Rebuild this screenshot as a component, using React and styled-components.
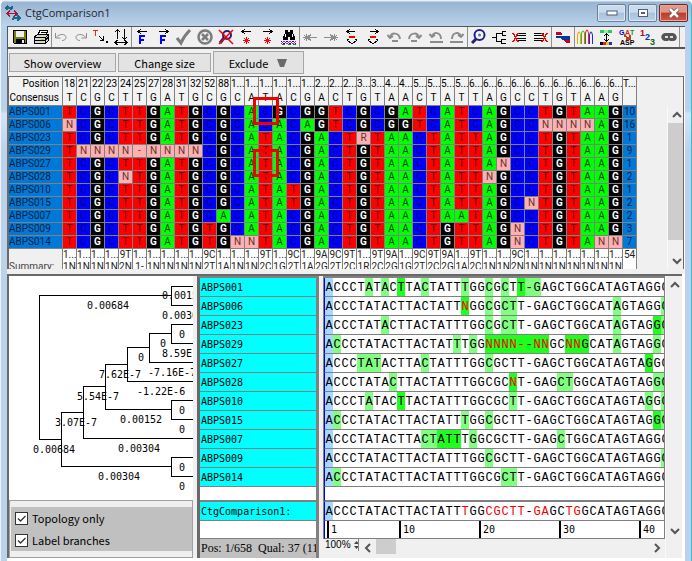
import React from 'react';
import styled, { createGlobalStyle } from 'styled-components';

const ui = '"Noto Sans CJK JP", "Open Sans", sans-serif';
const grid = 'Roboto, "Open Sans", sans-serif';
const mono = '"DejaVu Sans Mono", "Liberation Mono", monospace';

const GlobalStyle = createGlobalStyle`
  * { box-sizing: border-box; }
  body { margin: 0; background: #ffffff; font-family: ${ui}; font-size: 12px; color: #000; }
  button { font: inherit; color: inherit; margin: 0; padding: 0; }
  svg { display: block; }
`;

const Window = styled.div`
  display: flex;
  flex-direction: column;
  min-height: 100vh;
  overflow: hidden;
  background: linear-gradient(#b9d1ea 0 110px, #d4e4f4 114px, #bcd2ea 150px);
  border-right: 1px solid #22c4e0;
  border-bottom: 1px solid #22c4e0;
  border-left: 1px solid #eef4fa;
  border-radius: 6px 6px 0 0;
`;

const TitleBar = styled.header`
  display: flex;
  align-items: center;
  gap: 4px;
  height: 26px;
  padding: 0 3px 0 4px;
  background: linear-gradient(#e6eef7 0 1px, #98b4d2 2px, #b9d1ea 25px);
`;

const Title = styled.h1`
  flex: 1;
  margin: 0;
  font: 11px/18px "Open Sans", "Noto Sans", sans-serif;
  color: #1c2733;
`;

const Caption = styled.button`
  display: flex;
  align-items: center;
  justify-content: center;
  width: 29px;
  height: 18px;
  margin-left: -2px;
  border: 1px solid ${(p) => (p.$close ? '#6b2a26' : '#6d7f95')};
  border-radius: 2px;
  box-shadow: inset 0 0 0 1px ${(p) => (p.$close ? '#e6a89d' : '#dbe7f4')};
  background: ${(p) =>
    p.$close
      ? 'linear-gradient(#e0978a 0 45%, #c0392b 50%, #cc5a48)'
      : 'linear-gradient(#c9dbee 0 45%, #a9c1db 50%, #b8d0e8)'};
`;

const Client = styled.main`
  flex: 1;
  display: flex;
  flex-direction: column;
  margin: 0 6px;
  padding-bottom: 3px;
  background: #ffffff;
`;

const Toolbar = styled.div`
  display: flex;
  height: 23px;
  padding-left: 1px;
  overflow: hidden;
  background: #f0f0f0;
  border: 1px solid #555;
  border-right: 0;
  border-bottom-width: 2px;
`;

const ToolGroup = styled.div`
  display: flex;
  flex: none;
  padding: 0 ${(p) => (p.$wide ? 1 : 0)}px;
  box-shadow: ${(p) => (p.$first ? 'none' : 'inset 1px 0 #909090')};
`;

const Tool = styled.button`
  display: flex;
  align-items: center;
  justify-content: center;
  width: ${(p) => (p.$narrow ? 20 : 21)}px;
  border: 0;
  background: none;
`;

const ActionBar = styled.div`
  display: flex;
  align-items: center;
  gap: 2px;
  height: 27px;
  padding-left: 1px;
  background: #f0f0f0;
  border-left: 1px solid #696969;
`;

const Action = styled.button`
  display: flex;
  align-items: center;
  justify-content: center;
  gap: 8px;
  width: ${(p) => p.$width}px;
  height: ${(p) => (p.$menu ? 23 : 19)}px;
  border: 1px solid #a6a6a6;
  background: #e3e3e3;
  font: 11px/14px ${ui};
`;

const ComparisonPane = styled.section`
  position: relative;
  display: flex;
  height: 193px;
  margin-right: 1px;
  overflow: hidden;
  background: #f0f0f0;
  border: solid #696969;
  border-width: 1px 1px 0 2px;
`;

const Table = styled.table`
  flex: none;
  align-self: flex-start;
  border-spacing: 0;
  table-layout: fixed;
  width: 628px;
  font: 10px/12px ${grid};
`;

const NameCol = styled.col`
  width: 54px;
`;

const SiteCol = styled.col`
  width: 14px;
`;

const line = '1px solid #808080';

const HeadCell = styled.th`
  height: 29px;
  padding: 0;
  padding-right: ${(p) => (p.$name ? 3 : 0)}px;
  border-right: ${line};
  border-bottom: ${line};
  background: #f3f3f3;
  font-weight: 400;
  line-height: 14px;
  text-align: ${(p) => (p.$name ? 'right' : 'center')};
  vertical-align: top;
  overflow: hidden;
  white-space: nowrap;
`;

const NameCell = styled.th`
  height: 13px;
  padding: 0;
  border-right: ${line};
  border-bottom: ${line};
  background: #0078d7;
  color: #06223c;
  font-weight: 400;
  text-align: ${(p) => (p.$total ? 'center' : 'left')};
`;

const baseColors = {
  A: ['#00ff00', '#003c00'],
  C: ['#0000ff', '#000070'],
  G: ['#000000', '#ffffff'],
  T: ['#ff0000', '#500000'],
  N: ['#ffafaf', '#5a3434'],
};

const BaseCell = styled.td`
  height: 13px;
  padding: 0;
  border-right: ${line};
  border-bottom: ${line};
  background: ${(p) => (baseColors[p.$base] || baseColors.N)[0]};
  color: ${(p) => (baseColors[p.$base] || baseColors.N)[1]};
  font-weight: ${(p) => (p.$base === 'G' ? 700 : 400)};
  text-align: center;
`;

const SummaryCell = styled.td`
  height: 26px;
  padding: ${(p) => (p.$name ? '12px 0 0' : 0)};
  border-right: ${line};
  background: ${(p) => (p.$name ? '#f0f0f0' : '#ffffff')};
  color: ${(p) => (p.$name ? '#444' : '#222')};
  text-align: ${(p) => (p.$name ? 'left' : 'center')};
  vertical-align: top;
  overflow: hidden;
  white-space: nowrap;
`;

const Marker = styled.div`
  position: absolute;
  left: 244px;
  top: ${(p) => p.$top}px;
  width: 26px;
  height: 28px;
  border: 3px solid #f00000;
`;

const VScroll = styled.div`
  display: flex;
  flex-direction: column;
  width: ${(p) => p.$width}px;
  margin-left: ${(p) => (p.$far ? 'auto' : 0)};
  margin-top: ${(p) => p.$top || 0}px;
  padding-bottom: ${(p) => p.$bottom || 0}px;
  border-left: 1px solid #fafafa;
  background: #f0f0f0;
`;

const ScrollArrow = styled.button`
  display: flex;
  align-items: center;
  justify-content: center;
  flex: none;
  width: 17px;
  height: 17px;
  border: 0;
  background: none;
`;

const Track = styled.div`
  flex: 1;
  display: flex;
`;

const Thumb = styled.div`
  width: ${(p) => p.$w};
  height: ${(p) => p.$h};
  background: #cdcdcd;
`;

const Splitter = styled.div`
  height: 5px;
  background: #f0f0f0;
`;

const AlignPane = styled.section`
  flex: 1;
  display: flex;
  margin-right: 3px;
  background: #f0f0f0;
  border: solid #696969;
  border-width: 2px 0 0 2px;
`;

const TreeColumn = styled.div`
  display: flex;
  flex-direction: column;
  width: 184px;
  margin-right: 4px;
  background: #ffffff;
`;

const TreeSvg = styled.svg`
  flex: none;
  shape-rendering: crispEdges;
  font: 10px ${mono};
`;

const OptionsFrame = styled.div`
  flex: 1;
  padding: 6px 0 6px 1px;
  background: #efefef;
  border: 1px solid #a0a0a0;
`;

const Options = styled.div`
  display: flex;
  flex-direction: column;
  justify-content: space-around;
  height: 100%;
  background: #c0c0c0;
`;

const Option = styled.label`
  display: flex;
  align-items: center;
  gap: 4px;
  padding-left: 4px;
  font: 11px/16px ${ui};
`;

const Check = styled.input`
  appearance: none;
  width: 13px;
  height: 13px;
  margin: 0;
  border: 1px solid #333;
  background: #fff
    url("data:image/svg+xml,%3Csvg xmlns='http://www.w3.org/2000/svg' viewBox='0 0 11 11'%3E%3Cpath d='M2 5.5l2.5 2.5L9.5 3' fill='none' stroke='%23333' stroke-width='1.3'/%3E%3C/svg%3E");
`;

const NameList = styled.div`
  display: flex;
  flex-direction: column;
  width: 122px;
  border: solid #808080;
  border-width: 2px 3px 0 3px;
  border-left-color: #696969;
  font: 10px/18px ${mono};
`;

const NameRow = styled.div`
  height: ${(p) => p.$h || 19}px;
  padding: 1px 0 0 1px;
  border-bottom: ${(p) => p.$rule || 1}px solid #808080;
  background: ${(p) => (p.$blank ? '#ffffff' : '#00ffff')};
  white-space: nowrap;
`;

const Status = styled.div`
  flex: 1;
  overflow: hidden;
  padding-left: 1px;
  background: #c0c0c0;
  font: 12px/19px "Liberation Serif", serif;
  white-space: pre;
`;

const SequenceColumn = styled.div`
  flex: 1;
  min-width: 0;
  display: flex;
  flex-direction: column;
  margin-left: 4px;
`;

const SequenceArea = styled.div`
  border: solid #808080;
  border-width: 2px 1px 0 1px;
  background: #ffffff;
`;

const SeqRow = styled.div`
  display: flex;
  height: ${(p) => p.$h || 19}px;
  overflow: hidden;
  border-left: 1px solid #0000f0;
  border-bottom: ${(p) => p.$rule || 1}px solid #808080;
`;

const shades = { light: '#80ff80', dark: '#1eff1e', cursor: '#a6d8ff', none: 'transparent' };

const Letter = styled.span`
  flex: none;
  width: 8px;
  padding-top: 1px;
  background: ${(p) => shades[p.$shade]};
  color: ${(p) => (p.$red ? '#f00000' : '#000000')};
  font: 12px/18px "Liberation Mono", monospace;
  text-align: center;
`;

const Tick = styled.span`
  flex: none;
  width: ${(p) => p.$span * 8}px;
  border-left: 2px solid #000;
  padding-left: 2px;
  font: 10px/18px ${mono};
`;

const Ruler = styled(SeqRow)`
  padding-left: 2px;
`;

const BottomBar = styled.div`
  flex: 1;
  display: flex;
  align-items: flex-start;
`;

const ZoomButton = styled.button`
  display: flex;
  align-items: center;
  gap: 3px;
  width: 36px;
  height: 12px;
  padding-left: 2px;
  border: 0;
  border-right: 1px solid #808080;
  background: none;
  font: 10px/12px "Liberation Sans", sans-serif;
`;

const Arrow = ({ d }) => (
  <svg width="10" height="10" viewBox="0 0 10 10" fill="none" stroke="#555" strokeWidth="2">
    <path d={d} />
  </svg>
);
const UP = 'M1 7l4-4 4 4';
const DOWN = 'M1 3l4 4 4-4';
const LEFT = 'M7 1l-4 4 4 4';
const RIGHT = 'M3 1l4 4-4 4';

const Svg = ({ children, crisp = true }) => (
  <svg width="16" height="18" viewBox="0 0 16 18" fill="none" stroke="#000" shapeRendering={crisp ? 'crispEdges' : 'auto'}>
    {children}
  </svg>
);

const Star = ({ x, y, c = 'red' }) => (
  <path stroke={c} strokeWidth="1" d={`M${x - 3} ${y + 0.5}h7M${x + 0.5} ${y - 3}v7M${x - 2} ${y - 2}l5 5M${x + 3} ${y - 2}l-5 5`} />
);

const SmallArrow = ({ right, x = 3, y = 3.5, len = 9 }) =>
  right ? (
    <path d={`M${x} ${y}h${len}M${x + len - 3} ${y - 2.5}l3 2.5l-3 2.5`} />
  ) : (
    <path d={`M${x} ${y}h${len}M${x + 3} ${y - 2.5}l-3 2.5l3 2.5`} />
  );

const icons = {
  Save: (
    <Svg>
      <path d="M1.5 2.5h13v13h-12l-1-1z" fill="#7c7c10" />
      <path d="M4 3h8v6H4z" fill="#eee" stroke="none" />
      <path d="M4 11h9v4H4z" fill="#000" stroke="none" />
      <path d="M10 12h2v3h-2z" fill="#eee" stroke="none" />
    </Svg>
  ),
  Print: (
    <Svg>
      <path d="M5 7l2-5h8l-2 5" fill="#fff" />
      <path d="M7.5 4.5h5M6.5 6.5h5" />
      <path d="M1.5 9l3-2.5h11v6l-3 3h-11z" fill="#d8d8d0" />
      <path d="M1.5 9.5h11v6M1.5 12.5h11M12.5 9.5l3-3M12.5 12l3-3" />
      <path d="M8 11h3" stroke="#c8c800" />
    </Svg>
  ),
  Undo: (
    <Svg crisp={false}>
      <path stroke="#8c8c8c" d="M2.5 5v5h5M3 9.500c3-4 10-4 10 0 0 2-2 3-4 3" />
    </Svg>
  ),
  Redo: (
    <Svg crisp={false}>
      <path stroke="#8c8c8c" d="M13.5 5v5h-5M13 9.500c-3-4-10-4-10 0 0 2 2 3 4 3" />
    </Svg>
  ),
  'Move text': (
    <Svg>
      <path stroke="#f02020" d="M0 2.5h5M2.5 2v6" />
      <path d="M6 8l4 4M10.5 8v4.500h-4" />
      <path d="M13 13h2v2h-2z" fill="#000" stroke="none" />
    </Svg>
  ),
  Resize: (
    <Svg>
      <path d="M4.5 1v10M2 4l2.500-2.500L7 4M11.500 1v10M9 9l2.500 2.500L14 9M2 14.500h12M4.500 12L2 14.500 4.500 17M11.500 12l2.500 2.500-2.500 2.500" />
    </Svg>
  ),
  'Previous feature': (
    <Svg>
      <SmallArrow x={4} />
      <path stroke="#0000ff" strokeWidth="2" d="M6 16V8h5M5 12h5" />
    </Svg>
  ),
  'Next feature': (
    <Svg>
      <SmallArrow right x={4} />
      <path stroke="#0000ff" strokeWidth="2" d="M6 16V8h5M5 12h5" />
    </Svg>
  ),
  Accept: (
    <Svg crisp={false}>
      <path stroke="#7c7c7c" strokeWidth="3" d="M1 10l4 5c2-5 5-9 9-13" />
    </Svg>
  ),
  Reject: (
    <Svg crisp={false}>
      <circle cx="8" cy="9" r="6.5" stroke="#7c7c7c" strokeWidth="2.5" />
      <path stroke="#7c7c7c" strokeWidth="2.5" d="M5 6l6 6M11 6l-6 6" />
    </Svg>
  ),
  'Clear search': (
    <Svg crisp={false}>
      <circle cx="9" cy="7" r="4" stroke="#202080" strokeWidth="2" />
      <path stroke="#202080" strokeWidth="3" d="M6 10l-4 5" />
      <path stroke="red" strokeWidth="1.5" d="M1 2l14 14M15 2L1 16" />
    </Svg>
  ),
  'Previous mark': (<Svg><SmallArrow x={3} /><Star x={7} y={12} /></Svg>),
  'Next mark': (<Svg><SmallArrow right x={3} /><Star x={7} y={12} /></Svg>),
  Find: (
    <Svg>
      <path fill="#000" stroke="none" d="M4 2h3v2h2V2h3v3l2 4v3H9V9H7v3H2V9l2-4z" />
      <path stroke="#fff" d="M4.5 6v3M11.5 6v3" />
      <path stroke="#0000ff" d="M0 13.5l3 2 3-2 3 2 3-2 3 2" />
      <path stroke="#c020a0" d="M0 15.5l3-2 3 2 3-2 3 2 3-2" />
      <path stroke="#109010" d="M1 16.5h3M7 16.5h3M12 16.5h3" />
    </Svg>
  ),
  'Previous difference': (<Svg><Star x={4} y={9} c="#8c8c8c" /><path stroke="#8c8c8c" d="M6 9.5h9M9 6.5l-3 3 3 3" /></Svg>),
  'Next difference': (<Svg><Star x={11} y={9} c="#8c8c8c" /><path stroke="#8c8c8c" d="M1 9.5h9M7 6.5l3 3-3 3" /></Svg>),
  'Previous gap': (<Svg><SmallArrow x={3} len={8} /><path stroke="red" strokeWidth="2" d="M5 9h6" /><path d="M3 11.5h2M11 11.5h2M3 12l5 4 5-4" /></Svg>),
  'Next gap': (<Svg><SmallArrow right x={5} len={8} /><path stroke="red" strokeWidth="2" d="M5 9h6" /><path d="M3 11.5h2M11 11.5h2M3 12l5 4 5-4" /></Svg>),
  'Rotate back': (<Svg crisp={false}><path stroke="#8c8c8c" strokeWidth="2" d="M4 10c1-6 9-6 10 1M1.5 7l2.5 3 3-2M6 13h6" /></Svg>),
  'Rotate forward': (<Svg crisp={false}><path stroke="#8c8c8c" strokeWidth="2" d="M12 10c-1-6-9-6-10 1M14.5 7L12 10 9 8M4 13h6" /></Svg>),
  'Undo all': (<Svg crisp={false}><path stroke="#8c8c8c" strokeWidth="2" d="M4 9c1-6 9-5 9 2M1.5 6L4 9l3-2M2 14h13" /></Svg>),
  'Redo all': (<Svg crisp={false}><path stroke="#8c8c8c" strokeWidth="2" d="M12 9c-1-6-9-5-9 2M14.5 6L12 9 9 7M1 14h13" /></Svg>),
  Zoom: (
    <Svg crisp={false}>
      <circle cx="9.5" cy="7" r="5" stroke="#202080" strokeWidth="2" fill="#f4f6fc" />
      <circle cx="9.5" cy="7" r="1.5" fill="#5878b0" stroke="none" />
      <path stroke="#202080" strokeWidth="3" d="M6 11l-4 4" />
    </Svg>
  ),
  Tree: (<Svg><path d="M15 3.5h-4v4h4M11 5.5H5.5v8H10M1 9.5h4M15 11.5h-5v4h5" /></Svg>),
  'Remove left': (<Svg><path d="M5 5.5h9M5 7.5h9M5 10.5h9M5 12.5h9" /><path stroke="red" strokeWidth="1.5" d="M1 5l5 9M6 5l-5 9" /></Svg>),
  'Remove right': (<Svg><path d="M1 5.5h10M1 7.5h10M1 10.5h10M1 12.5h10" /><path stroke="red" strokeWidth="1.5" d="M9 5l5 9M14 5l-5 9" /></Svg>),
  Strands: (
    <Svg>
      <path fill="#c80028" stroke="none" d="M1 4h4l2 2v1H1zM8 12h7v3h-4z" />
      <path fill="#003c96" stroke="none" d="M1 8h14v4H7L5 10H1z" />
    </Svg>
  ),
  Traces: (
    <Svg crisp={false}>
      <path stroke="#ff9c00" d="M.5 16V7l1-3h1l1 3v9" />
      <path stroke="#22c822" d="M4.500 16V5l1-2h1l1 2v11" />
      <path stroke="#f02020" d="M8.5 16V5l1-3h1l1 3v11" />
      <path stroke="#1830e0" d="M12.500 16V7l1-3h1l1 3v9" />
    </Svg>
  ),
  'Fit height': (
    <Svg>
      <path stroke="#30c860" strokeWidth="3" d="M2 3.5h4M10 3.5h4" />
      <path stroke="#a0e8a0" strokeWidth="3" d="M6 3.5h4" />
      <path d="M8.5 5.5v8M6 8l2.500-2.500L11 8M6 11l2.500 2.500L11 11" />
      <path strokeWidth="3" d="M2 15.5h3" />
      <path stroke="#e02020" strokeWidth="3" d="M5 15.5h3" />
      <path stroke="#f0c000" strokeWidth="3" d="M8 15.5h3" />
      <path stroke="#2030c0" strokeWidth="3" d="M11 15.5h3" />
    </Svg>
  ),
  Translate: (
    <Svg>
      <g fontFamily="Liberation Sans" fontSize="7" fontWeight="700" stroke="none">
        <text x="0" y="7" fill="#0000e0">G</text>
        <text x="6" y="7" fill="#d02020">A</text>
        <text x="11" y="7" fill="#109010">T</text>
        <text x="1" y="17" fill="#000">ASP</text>
      </g>
      <path stroke="#c04010" strokeWidth="2" d="M5 7l5 4M11 7v4H7" />
    </Svg>
  ),
  Numbering: (
    <Svg>
      <g fontFamily="Liberation Sans" fontSize="9" fontWeight="700" stroke="none">
        <text x="0" y="8" fill="#c00020">1</text>
        <text x="5" y="12" fill="#0030c0">2</text>
        <text x="10" y="17" fill="#106010">3</text>
      </g>
    </Svg>
  ),
  Mask: (
    <Svg crisp={false}>
      <path fill="#555" stroke="none" d="M4 5h8c5 1 5 8 0 8H9L8 12 7 13H4C-1 12-1 6 4 5z" />
      <path fill="#ddd" stroke="none" d="M4 8h3v2H4zM9 8h3v2H9z" />
    </Svg>
  ),
  Panels: (<Svg><path stroke="#666" d="M2.5 2.5h10v5h-10zM2.5 10.5h10v5h-10zM5 5.5h5" /></Svg>),
};

const toolGroups = [
  ['Save', 'Print'],
  ['Undo', 'Redo', 'Move text', 'Resize'],
  ['Previous feature', 'Next feature', 'Accept', 'Reject', 'Clear search', 'Previous mark', 'Next mark', 'Find'],
  ['Previous difference', 'Next difference', 'Previous gap', 'Next gap', 'Rotate back', 'Rotate forward', 'Undo all', 'Redo all'],
  ['Zoom', 'Tree', 'Remove left', 'Remove right'],
  ['Strands'],
  ['Traces', 'Fit height', 'Translate', 'Numbering', 'Mask'],
  ['Panels'],
];

const positions = '18 21 22 23 24 25 27 28 31 32 52 88 1 1 1 1 1 1 2 2 2 3 3 4 4 5 5 5 5 6 6 6 6 6 6 6 6 6 6 6'
  .split(' ')
  .map((p) => (p.length === 1 ? `${p}...` : p));
const consensus = 'TCGCTTGATGCGCATACGACTGTAACTATTAGCCTGTAAG';

const samples = [
  ['ABPS001', 'TCGCTTGATGCGCACGCGGTCGCGATCATCAGCCTGTAAG', 10],
  ['ABPS006', 'NCGCTTGATGCGCACACAGTCGCGGTCATCAGCCNNNNAG', 16],
  ['ABPS023', 'TCGCTTGATGCGCATACGACTRTAACTATTAGCCTGTAAG', 1],
  ['ABPS029', 'TNNNN-NNNNCGCATACGACTGTAACTATTAGCCTGTAAG', 9],
  ['ABPS027', 'TCGCTTGATGCGCATACGACTGTAACTATTANCCTGTAAG', 1],
  ['ABPS028', 'TCGCNTGATGCGCATACGACTGTAACTATTNGCCTGTAAG', 2],
  ['ABPS010', 'TCGCTTGATGCGCATATGACTGTAACTATTAGCCTGTAAG', 1],
  ['ABPS015', 'TCGCTTGATGCGCATATGACTGTAACTATTAGCNTGTAAG', 2],
  ['ABPS007', 'TCGCTTGATGCACATACGACTGTAACTAATAGCCTGTAAG', 2],
  ['ABPS009', 'TCGCTTGATGTGCATACGACTGTAACTGTTAGNCTGTAAG', 3],
  ['ABPS014', 'TCGCTTGATGTGNNTACGACTGTAACTGTTAGNCTGTANN', 7],
];

const summary = (
  '1N 1N 1N 1N 9T2N 1- 1N 1N 1N 1N 9C2T 1A 1N 1N 9T2C 1G 9C2T 1A 9A2G 9C2T 9T2C 1R 9T2C 9A2G 1G ' +
  '9C2T 9T2C 9A2G 1A 9T2C 1N 1N 9C2N 1N 1N 1N 1N 1N 1N 1N'
)
  .split(' ')
  .map((s) => (s.length === 4 ? [s.slice(0, 2), s.slice(2)] : ['1...', s]));

const reference = 'ACCCTATACTTACTATTTGGCGCTT-GAGCTGGCATAGTAGGC';

const alignment = [
  { light: [5, 7, 12, 17, 20, 22, 25, 26], dark: [9, 24] },
  { light: [20, 22, 23, 36, 42], dark: [17], edits: { 17: 'N' } },
  { light: [7, 20, 22, 23, 36, 42], dark: [41] },
  {
    light: [1, 16, 18, 36, 41],
    dark: [20, 21, 22, 23, 24, 25, 26, 27, 30, 31, 32],
    edits: { 20: 'N', 21: 'N', 22: 'N', 23: 'N', 24: '-', 26: 'N', 27: 'N', 30: 'N', 31: 'N' },
  },
  { light: [4, 5, 6, 12, 20], dark: [40] },
  { light: [8, 29, 30, 41, 42], dark: [23], edits: { 23: 'N' } },
  { light: [5, 23, 40, 42], dark: [9] },
  { light: [1, 17, 20, 42], dark: [41] },
  { light: [12, 13, 18, 29], dark: [14, 15, 16] },
  { light: [20, 42] },
  { light: [1, 22, 23] },
];

const variable = [17, 20, 21, 22, 23, 24, 26, 27, 30, 31];

const branches =
  'M39.5 295V439.5M39 295.5H171M171.5 286V305M171 286.5H193M171 305.5H193' +
  'M171.5 324V343M171 324.5H193M171 343.5H193M149.5 333V362M149 333.5H171M149 362.5H193' +
  'M127.5 347V381M127 347.5H149M127 381.5H193M105.5 364V409M105 364.5H127M105 409.5H171' +
  'M171.5 400V419M171 400.5H193M171 419.5H193M83.5 386V438M83 386.5H105M83 438.5H193' +
  'M61.5 412V466M61 412.5H83M61 466.5H171M171.5 457V476M171 457.5H193M171 476.5H193M39 439.5H61';

const branchLabels = [
  [162, 295, '0.00152'], [87, 305, '0.00684'], [162, 315, '0.00304'], [179, 334, '0'], [160, 343, '0'],
  [162, 353, '8.59E-7'], [138, 357, '0'], [99, 374, '7.62E-7'], [148, 372, '-7.16E-7'], [137, 391, '-1.22E-6'],
  [179, 410, '0'], [77, 396, '5.54E-7'], [120, 419, '0.00152'], [55, 422, '3.07E-7'], [179, 429, '0'],
  [118, 448, '0.00304'], [33, 449, '0.00684'], [179, 467, '0'], [98, 476, '0.00304'], [179, 486, '0'],
];

function SequenceRow({ marks }) {
  const { light = [], dark = [], edits = {}, red = [] } = marks;
  return (
    <SeqRow>
      {[...reference].map((base, i) => {
        const shade = i === 0 ? 'cursor' : dark.includes(i) ? 'dark' : light.includes(i) ? 'light' : 'none';
        return (
          <Letter key={i} $shade={shade} $red={i in edits || red.includes(i)}>
            {edits[i] || base}
          </Letter>
        );
      })}
    </SeqRow>
  );
}

export default function App() {
  return (
    <Window>
      <GlobalStyle />
      <TitleBar>
        <svg width="16" height="16" viewBox="0 0 16 16" shapeRendering="crispEdges" fill="none">
          <path stroke="#1a6a8a" strokeWidth="2" d="M1 3h7M3 1L1 3l2 2M7 1l-1 4M8 13h6M12 10l3 3-3 3M9 11l-1 4" />
          <path stroke="#b01030" d="M2 8.5h10M5 5.5l-3 3 3 3M9 5.5l3 3-3 3" />
        </svg>
        <Title>CtgComparison1</Title>
        <Caption aria-label="Minimize">
          <svg width="12" height="6"><rect x="1" y="1" width="10" height="4" fill="#fff" stroke="#555d70" /></svg>
        </Caption>
        <Caption aria-label="Maximize">
          <svg width="12" height="10" shapeRendering="crispEdges" fill="none">
            <path d="M1.5 1.5h9v7h-9z" fill="#fff" stroke="#555d70" /><path d="M4.5 4.5h3v1h-3z" stroke="#555d70" />
          </svg>
        </Caption>
        <Caption $close aria-label="Close">
          <svg width="12" height="10" viewBox="0 0 12 10" fill="none">
            <path d="M2 1l8 8M10 1L2 9" stroke="#5a4a55" strokeWidth="4" /><path d="M2 1l8 8M10 1L2 9" stroke="#fff" strokeWidth="2.5" />
          </svg>
        </Caption>
      </TitleBar>

      <Client>
        <Toolbar role="toolbar">
          {toolGroups.map((group, g) => (
            <ToolGroup key={g} $first={g === 0} $wide={group.length === 1}>
              {group.map((name) => (
                <Tool key={name} $narrow={g === 1} aria-label={name}>{icons[name]}</Tool>
              ))}
            </ToolGroup>
          ))}
        </Toolbar>

        <ActionBar>
          <Action $width={107}>Show overview</Action>
          <Action $width={93}>Change size</Action>
          <Action $width={91} $menu>
            Exclude
            <svg width="12" height="10"><path d="M1 1h10L8 9H4z" fill="#6a6a6a" /></svg>
          </Action>
        </ActionBar>

        <ComparisonPane>
          <Table>
            <colgroup>
              <NameCol />
              {positions.map((_, i) => <SiteCol key={i} />)}
              <SiteCol />
            </colgroup>
            <thead>
              <tr>
                <HeadCell $name>Position<br />Consensus</HeadCell>
                {positions.map((p, i) => <HeadCell key={i}>{p}<br />{consensus[i]}</HeadCell>)}
                <HeadCell>T...</HeadCell>
              </tr>
            </thead>
            <tbody>
              {samples.map(([name, bases, total]) => (
                <tr key={name}>
                  <NameCell scope="row">{name}</NameCell>
                  {[...bases].map((b, i) => <BaseCell key={i} $base={b}>{b}</BaseCell>)}
                  <NameCell as="td" $total>{total}</NameCell>
                </tr>
              ))}
              <tr>
                <SummaryCell $name>Summary:</SummaryCell>
                {summary.map(([a, b], i) => <SummaryCell key={i}>{a}<br />{b}</SummaryCell>)}
                <SummaryCell>54</SummaryCell>
              </tr>
            </tbody>
          </Table>
          <VScroll $width={16} $far $top={29}>
            <ScrollArrow aria-label="Scroll up"><Arrow d={UP} /></ScrollArrow>
            <Track><Thumb $w="100%" $h="91%" /></Track>
            <ScrollArrow aria-label="Scroll down"><Arrow d={DOWN} /></ScrollArrow>
          </VScroll>
          <Marker $top={20} />
          <Marker $top={72} />
        </ComparisonPane>
        <Splitter />

        <AlignPane>
          <TreeColumn>
            <TreeSvg width="184" height="224" viewBox="9 276 184 224">
              <path d={branches} stroke="#000" fill="none" />
              {branchLabels.map(([x, y, text], i) => <text key={i} x={x} y={y + 4}>{text}</text>)}
            </TreeSvg>
            <OptionsFrame>
              <Options>
                <Option><Check type="checkbox" defaultChecked />Topology only</Option>
                <Option><Check type="checkbox" defaultChecked />Label branches</Option>
              </Options>
            </OptionsFrame>
          </TreeColumn>

          <NameList>
            {samples.map(([name]) => <NameRow key={name}>{name}</NameRow>)}
            <NameRow $blank $h={15} $rule={2} />
            <NameRow>CtgComparison1:</NameRow>
            <NameRow $blank $h={18} />
            <Status>Pos: 1/658  Qual: 37 (11.</Status>
          </NameList>

          <SequenceColumn>
            <SequenceArea>
              {alignment.map((marks, i) => <SequenceRow key={i} marks={marks} />)}
              <SeqRow $h={15} $rule={2} />
              <SequenceRow marks={{ red: variable }} />
              <Ruler $h={18}>
                <Tick $span={9}>1</Tick>
                <Tick $span={10}>10</Tick>
                <Tick $span={10}>20</Tick>
                <Tick $span={10}>30</Tick>
                <Tick $span={3}>40</Tick>
              </Ruler>
            </SequenceArea>
            <BottomBar>
              <ZoomButton aria-label="Zoom level">
                100%
                <svg width="5" height="10"><path d="M0 4L2.5 1 5 4zM0 6l2.5 3L5 6z" fill="#444" /></svg>
              </ZoomButton>
              <ScrollArrow aria-label="Scroll left"><Arrow d={LEFT} /></ScrollArrow>
              <Track><Thumb $w="20px" $h="15px" /></Track>
              <ScrollArrow aria-label="Scroll right"><Arrow d={RIGHT} /></ScrollArrow>
            </BottomBar>
          </SequenceColumn>
          <VScroll $width={17} $bottom={19}>
            <ScrollArrow aria-label="Scroll up"><Arrow d={UP} /></ScrollArrow>
            <Track />
            <ScrollArrow aria-label="Scroll down"><Arrow d={DOWN} /></ScrollArrow>
          </VScroll>
        </AlignPane>
      </Client>
    </Window>
  );
}
